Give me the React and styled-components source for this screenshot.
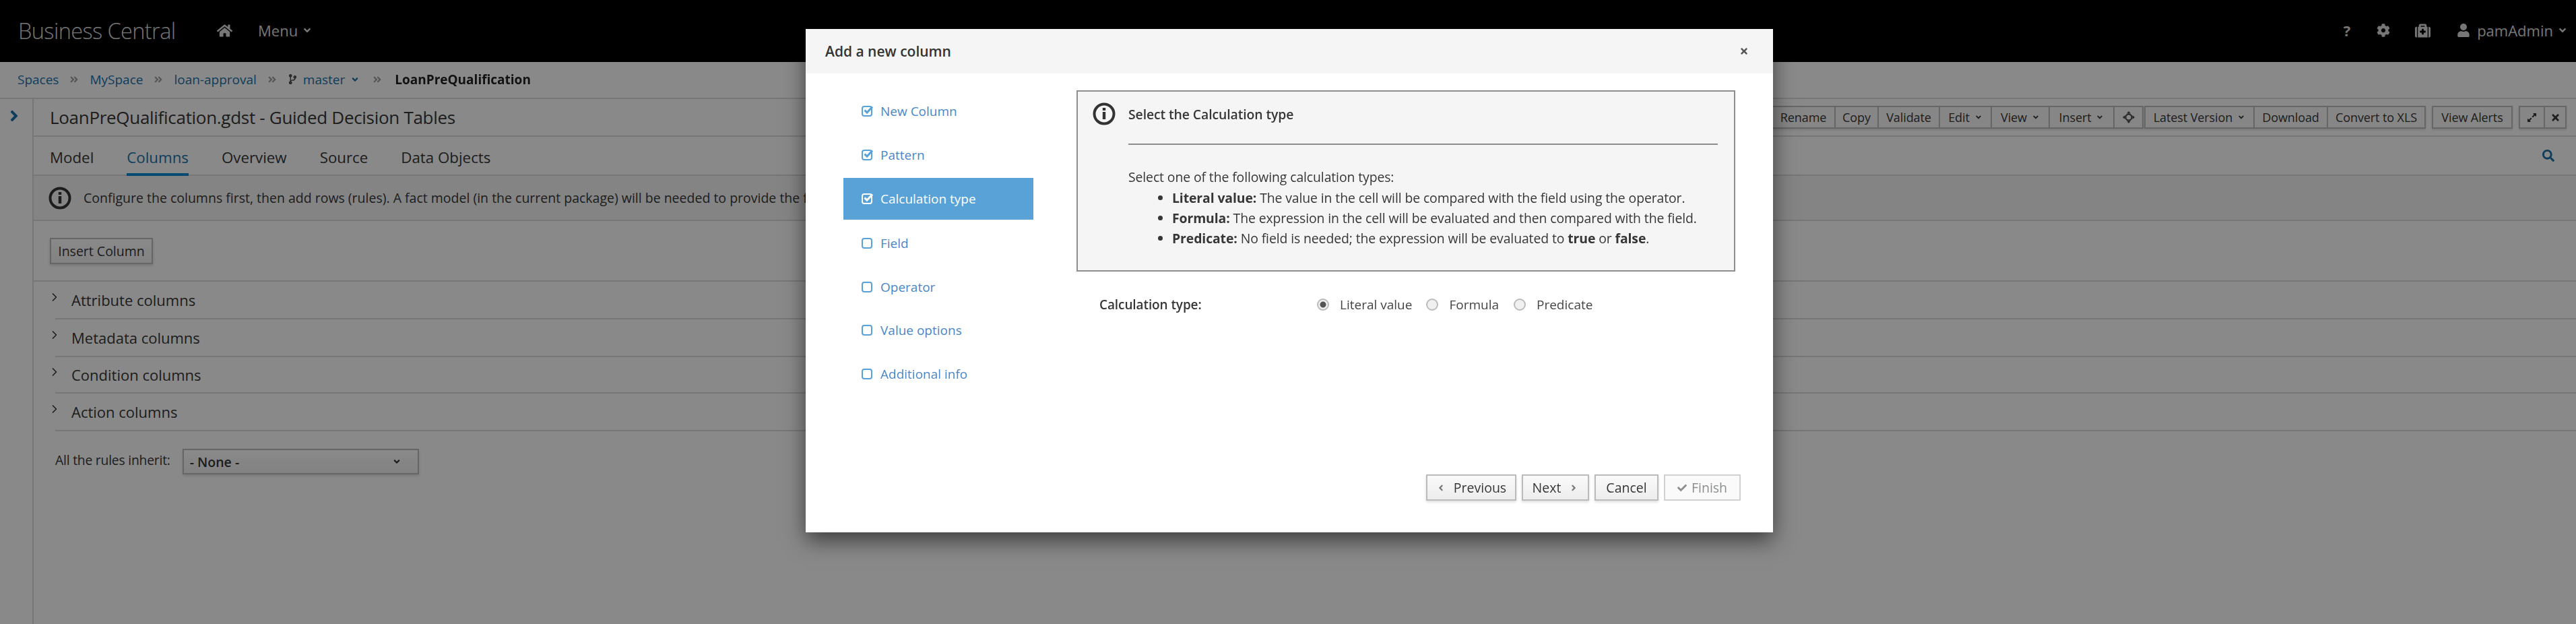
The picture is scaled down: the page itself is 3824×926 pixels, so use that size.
import styled, { createGlobalStyle } from "styled-components";
import {
  FaHome, FaCog, FaMedkit, FaUser, FaAngleDown, FaAngleRight, FaAngleLeft, FaAngleDoubleRight,
  FaCodeBranch, FaCheck, FaSearch, FaTimes, FaExpandAlt,
} from "react-icons/fa";
import { FiChevronRight } from "react-icons/fi";

const GlobalStyle = createGlobalStyle`
  html, body { margin: 0; padding: 0; background: #fff; }
  body { font-family: "Open Sans", "Liberation Sans", sans-serif; color: #363636; overflow: hidden; }
  * { box-sizing: border-box; }
`;

const Screen = styled.div`
  position: relative;
  width: 3824px;
  height: 926px;
  overflow: hidden;
  filter: blur(0.6px);
`;

const TopBar = styled.header`
  height: 92px;
  background: #000;
  color: #d8d8d8;
  display: flex;
  align-items: center;
  padding: 0 12px 2px 27px;
`;

const Brand = styled.div`
  font-size: 32.5px;
  font-weight: 300;
  letter-spacing: -0.6px;
  color: #d8d8d8;
  width: 295px;
`;

const TopLink = styled.div`
  display: flex;
  align-items: center;
  gap: 6px;
  font-size: 22px;
  font-weight: ${(p) => (p.$bold ? 700 : 400)};
  margin-left: ${(p) => p.$left || 0}px;
`;

const Spacer = styled.div`
  flex: 1;
`;

const Crumbs = styled.nav`
  height: 55px;
  padding: 0 0 2px 26px;
  display: flex;
  align-items: center;
  font-size: 19px;
  background: #fafafa;
  border-bottom: 2px solid #d8d8d8;
`;

const Crumb = styled.span`
  display: flex;
  align-items: center;
  gap: 8px;
  color: ${(p) => (p.$current ? "#222" : "#1d6fa5")};
  font-weight: ${(p) => (p.$current ? 700 : 400)};
`;

const CrumbSep = styled.span`
  display: flex;
  color: #9c9c9c;
  font-size: 14px;
  margin: 0 ${(p) => p.$gap || 16}px;
`;

const Body = styled.div`
  display: flex;
  height: 779px;
`;

const Rail = styled.aside`
  width: 50px;
  flex: none;
  border-right: 2px solid #d8d8d8;
  background: #fafafa;
  color: #1d6fa5;
  font-size: 26px;
  padding: 10px 0 0 8px;
`;

const Main = styled.main`
  flex: 1;
  min-width: 0;
  background: #fafafa;
`;

const TitleRow = styled.div`
  height: 56px;
  border-bottom: 2px solid #d8d8d8;
  display: flex;
  align-items: center;
  padding: 0 14px 0 24px;
`;

const DocTitle = styled.h1`
  margin: 0;
  font-size: 26px;
  font-weight: 400;
  letter-spacing: -0.3px;
  color: #363636;
`;

const ToolGroup = styled.div`
  display: flex;
  height: 34px;
  margin-left: ${(p) => p.$left || 0}px;
  background: #f5f5f5;
  border: 2px solid #bbb;
  box-shadow: 0 2px 3px rgba(0, 0, 0, 0.12);
`;

const ToolButton = styled.div`
  width: ${(p) => p.$w}px;
  display: flex;
  align-items: center;
  justify-content: center;
  gap: 7px;
  font-size: 18px;
  letter-spacing: -0.1px;
  color: #363636;
  white-space: nowrap;
  & + & { border-left: 2px solid #bbb; }
`;

const TabRow = styled.div`
  height: 58px;
  display: flex;
  align-items: stretch;
  gap: 49px;
  padding: 0 24px;
  border-bottom: 2px solid #d8d8d8;
`;

const Tab = styled.div`
  display: flex;
  align-items: center;
  padding-top: 6px;
  font-size: 22.3px;
  color: ${(p) => (p.$active ? "#1d6fa5" : "#363636")};
  border-bottom: ${(p) => (p.$active ? "4px solid #0088ce" : "4px solid transparent")};
  margin-bottom: -2px;
`;

const SearchIcon = styled.div`
  margin-left: auto;
  align-self: center;
  color: #1d6fa5;
  font-size: 18px;
  padding-right: 8px;
  display: flex;
`;

const InfoBar = styled.div`
  height: 67px;
  display: flex;
  align-items: center;
  gap: 18px;
  padding: 0 22px;
  font-size: 19.5px;
  white-space: nowrap;
  background: #f0f0f0;
  border-bottom: 2px solid #d8d8d8;
`;

const InsertArea = styled.div`
  height: 90px;
  padding-top: 25px;
  padding-left: 24px;
  border-bottom: 2px solid #d8d8d8;
`;

const Button = styled.div`
  height: 39px;
  width: ${(p) => p.$w}px;
  display: flex;
  align-items: center;
  justify-content: center;
  gap: ${(p) => p.$gap || 12}px;
  font-size: 19.5px;
  color: ${(p) => (p.$disabled ? "#8b8d8f" : "#363636")};
  background: ${(p) => (p.$disabled ? "#fafafa" : "linear-gradient(#fafafa, #ededed)")};
  border: 2px solid ${(p) => (p.$disabled ? "#d1d1d1" : "#bbb")};
  box-shadow: ${(p) => (p.$disabled ? "none" : "0 2px 4px rgba(0, 0, 0, 0.14)")};
`;

const Section = styled.div`
  height: ${(p) => p.$h}px;
  margin-left: 32px;
  display: flex;
  align-items: center;
  font-size: 22px;
  color: #363636;
  border-bottom: 2px solid #d8d8d8;
`;

const SectionArrow = styled.span`
  display: flex;
  font-size: 20px;
  width: 30px;
  margin-left: -11px;
  margin-right: 5px;
  margin-top: -8px;
`;

const InheritRow = styled.div`
  display: flex;
  align-items: center;
  gap: 18px;
  padding: 26px 0 0 32px;
`;

const InheritLabel = styled.span`
  font-size: 19.3px;
  letter-spacing: -0.2px;
  margin-top: -5px;
`;

const SelectBox = styled.div`
  width: 351px;
  height: 38px;
  display: flex;
  align-items: center;
  justify-content: space-between;
  padding: 0 24px 0 9px;
  font-size: 19.5px;
  font-weight: 600;
  background: linear-gradient(#fafafa, #ededed);
  border: 2px solid #bbb;
  box-shadow: 0 2px 4px rgba(0, 0, 0, 0.14);
`;

const Backdrop = styled.div`
  position: absolute;
  inset: 0;
  background: rgba(0, 0, 0, 0.45);
`;

const Modal = styled.section`
  position: absolute;
  left: 1196px;
  top: 43px;
  width: 1436px;
  height: 747px;
  background: #fff;
  display: flex;
  flex-direction: column;
  box-shadow: 0 12px 30px rgba(0, 0, 0, 0.55);
`;

const ModalHead = styled.div`
  height: 66px;
  flex: none;
  display: flex;
  align-items: center;
  justify-content: space-between;
  padding: 0 36px 0 29px;
  background: #f5f5f5;
`;

const ModalTitle = styled.h2`
  margin: 0;
  font-size: 21px;
  font-weight: 600;
  color: #333;
`;

const CloseIcon = styled.span`
  display: flex;
  font-size: 14px;
  color: #555;
`;

const ModalBody = styled.div`
  flex: 1;
  display: flex;
  padding: 24px 56px 0 56px;
`;

const Steps = styled.ol`
  list-style: none;
  margin: 0;
  padding: 0;
  width: 282px;
  flex: none;
`;

const Step = styled.li`
  height: ${(p) => (p.$active ? 62 : 64.5)}px;
  margin: ${(p) => (p.$active ? "2px 0 3px" : 0)};
  display: flex;
  align-items: center;
  gap: 10px;
  padding-left: 26px;
  font-size: 19px;
  color: ${(p) => (p.$active ? "#fff" : "#4a86c8")};
  background: ${(p) => (p.$active ? "#58a2d7" : "transparent")};
  svg { color: ${(p) => (p.$active ? "#fff" : "#58a2d7")}; flex: none; }
`;

const Content = styled.div`
  flex: 1;
  min-width: 0;
  margin: 1px 0 0 64px;
`;

const HelpBox = styled.div`
  height: 269px;
  width: 978px;
  display: flex;
  gap: 19px;
  padding: 16px 24px 0 22px;
  background: #f5f5f5;
  border: 2px solid #8b8d8f;
`;

const HelpMain = styled.div`
  flex: 1;
  font-size: 19.4px;
  letter-spacing: -0.1px;
  line-height: 26px;
  color: #363636;
`;

const HelpTitle = styled.div`
  height: 63px;
  padding-top: 5px;
  font-weight: 600;
  border-bottom: 2px solid #8b8d8f;
  margin-bottom: 35px;
`;

const HelpList = styled.ul`
  margin: 3px 0 0;
  padding-left: 65px;
  li { height: 30px; line-height: 30px; white-space: nowrap; }
`;

const FieldRow = styled.div`
  display: flex;
  align-items: center;
  margin-top: 36px;
  padding-left: 34px;
  font-size: 19px;
`;

const FieldLabel = styled.div`
  width: 323px;
  font-weight: 600;
  letter-spacing: -0.1px;
`;

const RadioItem = styled.label`
  display: flex;
  align-items: center;
  gap: 16px;
  margin-right: ${(p) => p.$gap}px;
  color: #444;
`;

const RadioDot = styled.span`
  width: 18px;
  height: 18px;
  border-radius: 50%;
  border: 2px solid #bbb;
  background: ${(p) => (p.$on ? "radial-gradient(circle, #555 0 4px, #f0f0f0 5px)" : "#f0f0f0")};
`;

const ModalFoot = styled.div`
  display: flex;
  justify-content: flex-end;
  gap: 8px;
  padding: 0 48px 47px 0;
`;

const tools = [
  { id: "edit", left: 0, items: [
    ["Rename", 92], ["Copy", 64], ["Validate", 91], ["Edit", 77, true], ["View", 86, true], ["Insert", 96, true], ["target", 43],
  ] },
  { id: "version", left: 1, items: [["Latest Version", 160, true], ["Download", 109], ["Convert to XLS", 145]] },
  { id: "alerts", left: 9, items: [["View Alerts", 116]] },
];

const steps = [
  ["New Column", true], ["Pattern", true], ["Calculation type", true, true],
  ["Field"], ["Operator"], ["Value options"], ["Additional info"],
];

const InfoIcon = ({ size }) => (
  <svg width={size} height={size} viewBox="0 0 34 34" style={{ flex: "none" }}>
    <circle cx="17" cy="17" r="14.5" fill="none" stroke="#333" strokeWidth="4" />
    <rect x="14.8" y="14" width="4.4" height="11" fill="#333" />
    <rect x="14.8" y="8" width="4.4" height="4" fill="#333" />
  </svg>
);

const TargetIcon = () => (
  <svg width="18" height="18" viewBox="0 0 18 18">
    <circle cx="9" cy="9" r="4.5" fill="none" stroke="#444" strokeWidth="2" />
    <path d="M9 0l3 3.5H6zM9 18l3-3.5H6zM0 9l3.5-3v6zM18 9l-3.5-3v6z" fill="#444" />
  </svg>
);

const StepBox = ({ done }) => (
  <svg width="19" height="18" viewBox="0 0 19 18" fill="none" stroke="currentColor">
    <rect x="2" y="2" width="14" height="14" rx="3" strokeWidth="2" />
    {done && <path d="M5.5 7.5l3.5 3.5 8-8.5" strokeWidth="3" />}
  </svg>
);

const App = () => {
  return (
    <Screen>
      <GlobalStyle />
      <TopBar>
        <Brand>Business Central</Brand>
        <TopLink><FaHome size={23} /></TopLink>
        <TopLink $left={38}>Menu<FaAngleDown size={16} /></TopLink>
        <Spacer />
        <TopLink $bold>?</TopLink>
        <TopLink $left={39}><FaCog size={20} /></TopLink>
        <TopLink $left={37}><FaMedkit size={23} /></TopLink>
        <TopLink $left={39}><FaUser size={20} /></TopLink>
        <TopLink $left={10}>pamAdmin<FaAngleDown size={16} /></TopLink>
      </TopBar>
      <Crumbs>
        <Crumb>Spaces</Crumb>
        <CrumbSep><FaAngleDoubleRight /></CrumbSep>
        <Crumb>MySpace</Crumb>
        <CrumbSep><FaAngleDoubleRight /></CrumbSep>
        <Crumb>loan-approval</Crumb>
        <CrumbSep><FaAngleDoubleRight /></CrumbSep>
        <Crumb><FaCodeBranch color="#444" size={15} />master<FaAngleDown size={14} /></Crumb>
        <CrumbSep $gap={19}><FaAngleDoubleRight /></CrumbSep>
        <Crumb $current>LoanPreQualification</Crumb>
      </Crumbs>
      <Body>
        <Rail><FaAngleRight /></Rail>
        <Main>
          <TitleRow>
            <DocTitle>LoanPreQualification.gdst - Guided Decision Tables</DocTitle>
            <Spacer />
            {tools.map((group) => (
              <ToolGroup key={group.id} $left={group.left}>
                {group.items.map(([label, w, caret]) => (
                  <ToolButton key={label} $w={w}>
                    {label === "target" ? <TargetIcon /> : label}
                    {caret && <FaAngleDown size={12} />}
                  </ToolButton>
                ))}
              </ToolGroup>
            ))}
            <ToolGroup $left={9}>
              <ToolButton $w={35}><FaExpandAlt size={15} /></ToolButton>
              <ToolButton $w={32}><FaTimes size={15} /></ToolButton>
            </ToolGroup>
          </TitleRow>
          <TabRow>
            <Tab>Model</Tab>
            <Tab $active>Columns</Tab>
            <Tab>Overview</Tab>
            <Tab>Source</Tab>
            <Tab>Data Objects</Tab>
            <SearchIcon><FaSearch /></SearchIcon>
          </TabRow>
          <InfoBar>
            <InfoIcon size={34} />
            Configure the columns first, then add rows (rules). A fact model (in the current package) will be needed to provide the facts
          </InfoBar>
          <InsertArea>
            <Button $w={153}>Insert Column</Button>
          </InsertArea>
          <Section $h={56}><SectionArrow><FiChevronRight /></SectionArrow>Attribute columns</Section>
          <Section $h={56}><SectionArrow><FiChevronRight /></SectionArrow>Metadata columns</Section>
          <Section $h={54}><SectionArrow><FiChevronRight /></SectionArrow>Condition columns</Section>
          <Section $h={56}><SectionArrow><FiChevronRight /></SectionArrow>Action columns</Section>
          <InheritRow>
            <InheritLabel>All the rules inherit:</InheritLabel>
            <SelectBox>- None -<FaAngleDown size={14} /></SelectBox>
          </InheritRow>
        </Main>
      </Body>
      <Backdrop />
      <Modal>
        <ModalHead>
          <ModalTitle>Add a new column</ModalTitle>
          <CloseIcon><FaTimes /></CloseIcon>
        </ModalHead>
        <ModalBody>
          <Steps>
            {steps.map(([label, done, active]) => (
              <Step key={label} $active={active}>
                <StepBox done={done} />
                {label}
              </Step>
            ))}
          </Steps>
          <Content>
            <HelpBox>
              <InfoIcon size={34} />
              <HelpMain>
                <HelpTitle>Select the Calculation type</HelpTitle>
                Select one of the following calculation types:
                <HelpList>
                  <li><strong>Literal value:</strong> The value in the cell will be compared with the field using the operator.</li>
                  <li><strong>Formula:</strong> The expression in the cell will be evaluated and then compared with the field.</li>
                  <li><strong>Predicate:</strong> No field is needed; the expression will be evaluated to <strong>true</strong> or <strong>false</strong>.</li>
                </HelpList>
              </HelpMain>
            </HelpBox>
            <FieldRow>
              <FieldLabel>Calculation type:</FieldLabel>
              <RadioItem $gap={21}><RadioDot $on />Literal value</RadioItem>
              <RadioItem $gap={22}><RadioDot />Formula</RadioItem>
              <RadioItem $gap={0}><RadioDot />Predicate</RadioItem>
            </FieldRow>
          </Content>
        </ModalBody>
        <ModalFoot>
          <Button $w={134}><FaAngleLeft size={14} color="#777" />Previous</Button>
          <Button $w={100}>Next<FaAngleRight size={14} color="#777" /></Button>
          <Button $w={95}>Cancel</Button>
          <Button $w={114} $disabled $gap={7}><FaCheck size={14} />Finish</Button>
        </ModalFoot>
      </Modal>
    </Screen>
  );
};

export default App;
